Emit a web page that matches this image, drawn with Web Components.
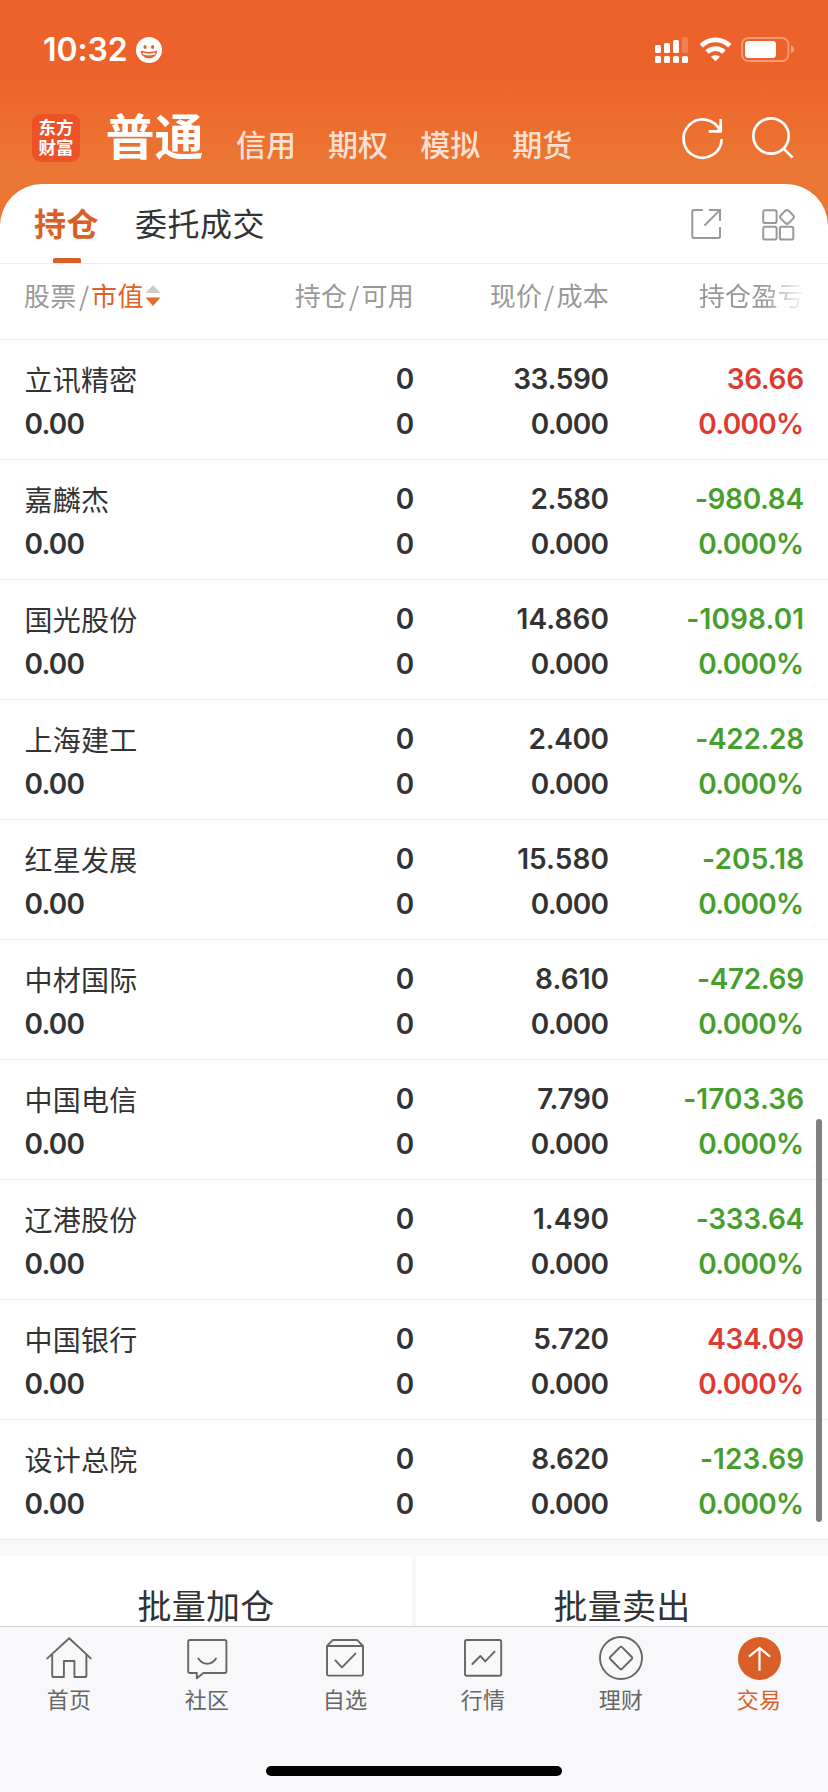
<!DOCTYPE html>
<html lang="zh-CN">
<head>
<meta charset="utf-8">
<title>持仓</title>
<style>
  html, body { margin: 0; padding: 0; }
  body { width: 828px; height: 1792px; overflow: hidden; background: #f7f8fa; font-family: Inter, "Noto Sans CJK SC", sans-serif; color: #333; }
</style>
</head>
<body>
<trade-app></trade-app>

<script>
const CJK = '"Noto Sans CJK SC", "Noto Sans", sans-serif';

function define(name, render) {
  customElements.define(name, class extends HTMLElement {
    connectedCallback() {
      if (this.shadowRoot) return;
      this.attachShadow({ mode: 'open' }).innerHTML = render(this);
    }
  });
}

/* Status bar: clock, focus face, signal, wifi, battery */
define('status-bar', () => `
<style>
  :host { display: flex; height: 100px; align-items: center; padding: 0 33px 0 43px; box-sizing: border-box; color: #fff; }
  .time { font: 600 32px/40px Inter, sans-serif; letter-spacing: -.1px; width: 93px; white-space: nowrap; }
  svg { display: block; }
  .face { margin-right: auto; }
  .wifi { margin: 0 9px 0 11px; }
</style>
<span class="time">10:32</span>
<svg class="face" width="26" height="26" viewBox="136 37 26 26">
  <circle cx="149" cy="50" r="13" fill="#fff"/>
  <ellipse cx="145.1" cy="47" rx="1.6" ry="2.1" fill="#ec622a"/><ellipse cx="152.6" cy="47" rx="1.6" ry="2.1" fill="#ec622a"/>
  <path d="M140.6 50.6Q149 53.4 157.2 50.6Q156.6 58.4 149 58.4Q141.4 58.4 140.6 50.6Z" fill="#ec622a"/>
  <path d="M142.4 52.6Q149 54.8 155.6 52.6L154.8 54.4Q149 56.2 143.2 54.4Z" fill="#fff"/>
</svg>
<svg width="33" height="26" viewBox="655 37 33 26" fill="#fff">
  <rect x="655" y="45" width="6" height="8" rx="1.6"/><rect x="664" y="43" width="6" height="10" rx="1.6"/>
  <rect x="673" y="40" width="6" height="13" rx="1.6"/><rect x="682" y="37" width="6" height="16" rx="1.6" opacity=".2"/>
  <rect x="655" y="56" width="6" height="7" rx="1.6"/><rect x="664" y="56" width="6" height="7" rx="1.6"/>
  <rect x="673" y="56" width="6" height="7" rx="1.6"/><rect x="682" y="56" width="6" height="7" rx="1.6"/>
</svg>
<svg class="wifi" width="33" height="26" viewBox="699 37 33 26">
  <g fill="none" stroke="#fff" stroke-width="4.8">
    <path d="M701.2 45.8A20.4 20.4 0 0 1 729.8 45.8"/><path d="M707 52A12.2 12.2 0 0 1 724 52"/>
  </g>
  <path d="M715.5 61.2L711 56.8Q715.5 53.4 720 56.8Z" fill="#fff"/>
</svg>
<svg width="54" height="26" viewBox="741 37 54 26">
  <rect x="742" y="38" width="46.4" height="23" rx="6.4" fill="none" stroke="#fff" stroke-opacity=".37" stroke-width="2"/>
  <rect x="745" y="41" width="31" height="17" rx="3.4" fill="#fff"/>
  <path d="M791 45Q794 46.4 794 49.2Q794 52 791 53.2Z" fill="#fff" opacity=".4"/>
</svg>`);

/* Account header: brand mark, account kinds, refresh and search */
define('account-header', () => `
<style>
  :host { display: flex; height: 84px; padding: 0 34px 0 32px; box-sizing: border-box; color: #fff; font-family: ${CJK}; }
  .logo { width: 48px; height: 48px; margin-top: 14px; border-radius: 9px; background: #eb5228; font-size: 17.5px; font-weight: 700; line-height: 20px; text-align: center; box-sizing: border-box; padding: 3px 6px 0; word-break: break-all; }
  nav { display: flex; align-items: baseline; height: 70px; margin-left: 25px; font-size: 30px; font-weight: 500; color: rgba(255,255,255,.8); line-height: 70px; }
  nav span { margin-right: 32.1px; white-space: nowrap; }
  nav .on { position: relative; top: -1px; left: .5px; font-size: 49px; font-weight: 700; color: #fff; margin-right: 33px; }
  svg { display: block; margin: 14px 0 0 auto; }
</style>
<div class="logo">东方财富</div>
<nav><span class="on">普通</span><span>信用</span><span>期权</span><span>模拟</span><span>期货</span></nav>
<svg width="114" height="48" viewBox="680 114 114 48" fill="none" stroke="#fff" stroke-width="2.7">
  <path d="M721.7 139A19.1 19.1 0 1 1 720.2 131.2"/><path d="M720.7 119V131.4H708.7"/>
  <circle cx="771" cy="136" r="17.7"/><path d="M783.4 148.4L792.6 157.6"/>
</svg>`);

/* Sheet tabs */
define('sheet-tabs', () => `
<style>
  :host { display: flex; height: 80px; box-sizing: border-box; border-bottom: 1px solid #ececec; padding: 0 33px 0 34px; font: 400 32px/76px ${CJK}; letter-spacing: .5px; color: #333; }
  .on { position: relative; color: #d95e27; font-weight: 700; margin-right: 36px; }
  .on::after { content: ""; position: absolute; left: 19px; bottom: 0; width: 28px; height: 5px; border-radius: 2px 2px 0 0; background: #d95e27; }
  svg { display: block; margin: 23px 0 0 auto; }
</style>
<span class="on">持仓</span><span>委托成交</span>
<svg width="105" height="36" viewBox="690 207 105 36" fill="none" stroke="#999" stroke-width="2">
  <path d="M702.8 210H694Q692.3 210 692.3 211.7V236.3Q692.3 238 694 238H718.3Q720 238 720 236.3V227"/>
  <path d="M709 210H720V221M719.6 210.4L704.5 225.5"/>
  <rect x="763.2" y="210.2" width="13.4" height="12.9" rx="1.8"/><rect x="763.2" y="226.7" width="13.4" height="12.9" rx="1.8"/><rect x="779.9" y="226.7" width="13.4" height="12.9" rx="1.8"/>
  <rect x="781.5" y="211.4" width="11" height="11" rx="2.4" transform="rotate(45 787 216.9)"/>
</svg>`);

/* Column titles */
define('table-head', () => `
<style>
  :host { display: grid; grid-template-columns: 190px 199px 195px 195px; height: 76px; box-sizing: border-box; padding-left: 24px; border-bottom: 1px solid #ececec; font: 400 26px/62px ${CJK}; letter-spacing: .3px; color: #999; }
  div { text-align: right; white-space: nowrap; position: relative; left: 1px; }
  i { font-style: normal; margin: 0 1.8px; }
  .first { text-align: left; display: flex; left: 0; }
  .first i { margin: 0 1.6px 0 2.4px; }
  b { font-weight: 400; color: #e0622a; }
  svg { display: block; margin: 21px 0 0 1px; }
  .fade { -webkit-mask-image: linear-gradient(90deg, #000 0 155px, transparent 197px); mask-image: linear-gradient(90deg, #000 0 155px, transparent 197px); }
</style>
<div class="first">股票<i>/</i><b>市值</b><svg width="16" height="22" viewBox="0 0 16 22"><path d="M8 0L15.4 8H.6Z" fill="#ccc"/><path d="M8 21L15.4 12.4H.6Z" fill="#e8672f"/></svg></div>
<div>持仓<i>/</i>可用</div><div>现价<i>/</i>成本</div><div class="fade">持仓盈亏</div>`);

/* Numerals: the tracking evens out the narrow 1 and the wide 0 */
function num(text) {
  const ls = /^0\.0/.test(text) ? -.7 : text.includes('1') ? .1 : -.35;
  return `<span style="letter-spacing:${ls}px;margin-right:${(-.1 - ls).toFixed(2)}px">${text}</span>`;
}

/* One holding */
define('stock-row', el => `
<style>
  :host { display: grid; grid-template-columns: 190px 199px 195px 195px; height: 120px; box-sizing: border-box; padding: 17px 0 0 25px; border-bottom: 1px solid #ececec; font: 600 28px/45px Inter, sans-serif; color: #333; }
  div { text-align: right; white-space: nowrap; }
  div span { display: block; }
  .name { text-align: left; position: relative; left: -.6px; }
  .name span:first-child { font: 400 28px/45px ${CJK}; letter-spacing: .3px; }
  .pl { color: ${el.getAttribute('pl').startsWith('-') ? '#469f2c' : '#dd3a32'}; }
</style>
<div class="name"><span><slot></slot></span>${num('0.00')}</div>
<div>${num('0')}${num('0')}</div>
<div>${num(el.getAttribute('price'))}${num('0.000')}</div>
<div class="pl">${num(el.getAttribute('pl'))}${num('0.000%')}</div>`);

define('batch-actions', () => `
<style>
  :host { display: grid; grid-template-columns: 412px 412px; column-gap: 4px; height: 70px; margin-top: 16px; font: 400 34px/58px ${CJK}; letter-spacing: .2px; color: #333; text-align: center; }
  div { background: #fff; box-sizing: border-box; height: 70px; padding-top: 20px; }
  div:first-child { padding-right: 3px; }
</style>
<div>批量加仓</div><div>批量卖出</div>`);

define('tab-item', el => `
<style>
  :host { display: flex; flex-direction: column; align-items: center; width: 138px; font: 400 22px/32px ${CJK}; color: #666; }
  :host([active]) { color: #d95e27; }
  svg { display: block; margin: 7px 0 0; }
  span { letter-spacing: .2px; }
</style>
<svg width="48" height="48" viewBox="${el.getAttribute('left')} 1634 48 48" fill="none" stroke="currentColor" stroke-width="1.9" stroke-linecap="round" stroke-linejoin="round">${ICONS[el.getAttribute('icon')]}</svg>
<span><slot></slot></span>`);

const ICONS = {
  home: '<path d="M47.3 1658.4L69.2 1638.2L90.8 1658.4"/><path d="M52.2 1655V1675.4Q52.2 1677 53.8 1677H63.9V1661H74.4V1677H84.8Q86.4 1677 86.4 1675.4V1655"/>',
  chat: '<path d="M190 1640H224.6Q226.4 1640 226.4 1641.8V1671.2Q226.4 1673 224.6 1673H203.4L196.8 1678.2V1673H190Q188.2 1673 188.2 1671.2V1641.8Q188.2 1640 190 1640Z"/><path d="M198.4 1658.6Q201.6 1663.8 207.2 1663.8T216 1658.6"/>',
  pick: '<path d="M327 1646L332.2 1640.6Q332.7 1640 333.6 1640H356.4Q357.3 1640 357.8 1640.6L363 1646V1673.8Q363 1675.6 361.2 1675.6H328.8Q327 1675.6 327 1673.8ZM327 1646H363"/><path d="M335.4 1660.4L342 1667.4L355.4 1653.6"/>',
  chart: '<rect x="465" y="1640" width="36.2" height="35.8" rx="1.8"/><path d="M472.4 1664L480.4 1656L485.2 1661.4L494.6 1651.6"/>',
  wealth: '<circle cx="621" cy="1658" r="21"/><path d="M620 1647.2Q621 1646.2 622 1647.2L631.8 1657Q632.8 1658 631.8 1659L622 1668.8Q621 1669.8 620 1668.8L610.2 1659Q609.2 1658 610.2 1657Z"/>',
  trade: '<circle cx="759.5" cy="1658.5" r="21.5" fill="#d95e27" stroke="none"/><path d="M759.5 1670.8V1648.2M749 1656.6L759.5 1648L770.1 1656.6" stroke="#fff" stroke-width="2.2" stroke-linecap="butt" stroke-linejoin="miter"/>'
};

define('tab-bar', () => `
<style>
  :host { display: flex; flex-direction: column; height: 166px; box-sizing: border-box; border-top: 1px solid #d2d2d6; background: #f8f8fa; }
  .items { display: flex; height: 139px; }
  .home { width: 296px; height: 10px; border-radius: 5px; background: #000; margin: 0 auto; }
</style>
<div class="items">
  <tab-item icon="home" left="45">首页</tab-item><tab-item icon="chat" left="183">社区</tab-item>
  <tab-item icon="pick" left="321">自选</tab-item><tab-item icon="chart" left="459">行情</tab-item>
  <tab-item icon="wealth" left="597">理财</tab-item><tab-item icon="trade" left="735" active>交易</tab-item>
</div>
<div class="home"></div>`);

define('trade-app', () => `
<style>
  :host { display: block; position: relative; width: 828px; height: 1792px; background: #f7f8fa; }
  .top { height: 240px; margin-bottom: -56px; background: linear-gradient(#ec622a 0 70px, #ed6b2e 112px, #eb7532 160px, #ed7633 240px); }
  .sheet { position: relative; background: #fff; border-radius: 42px 42px 0 0; }
  .bar { position: absolute; left: 816px; top: 1119px; width: 6px; height: 403px; border-radius: 3px; background: #808080; }
</style>
<div class="top"><status-bar></status-bar><account-header></account-header></div>
<div class="sheet">
  <sheet-tabs></sheet-tabs>
  <table-head></table-head>
  <stock-row price="33.590" pl="36.66">立讯精密</stock-row>
  <stock-row price="2.580" pl="-980.84">嘉麟杰</stock-row>
  <stock-row price="14.860" pl="-1098.01">国光股份</stock-row>
  <stock-row price="2.400" pl="-422.28">上海建工</stock-row>
  <stock-row price="15.580" pl="-205.18">红星发展</stock-row>
  <stock-row price="8.610" pl="-472.69">中材国际</stock-row>
  <stock-row price="7.790" pl="-1703.36">中国电信</stock-row>
  <stock-row price="1.490" pl="-333.64">辽港股份</stock-row>
  <stock-row price="5.720" pl="434.09">中国银行</stock-row>
  <stock-row price="8.620" pl="-123.69">设计总院</stock-row>
</div>
<batch-actions></batch-actions>
<tab-bar></tab-bar>
<div class="bar"></div>`);
</script>
</body>
</html>
